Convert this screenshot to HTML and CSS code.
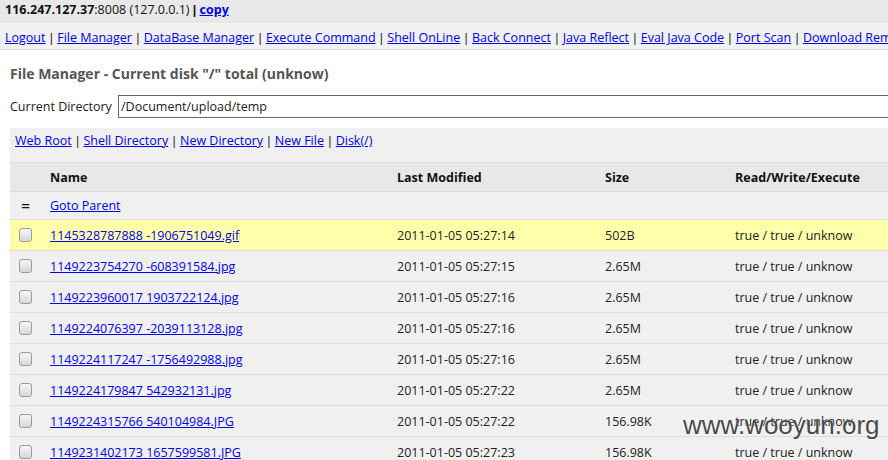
FILE: index.html
```html
<!DOCTYPE html>
<html>
<head>
<meta charset="utf-8">
<title>File Manager</title>
<link rel="stylesheet" href="styles.css">
</head>
<body>
<div class="topbar"><b>116.247.127.37</b>:8008 (127.0.0.1) <b class="tsep">|</b> <a class="copy" href="#">copy</a></div>
<div class="nav">
<a href="#">Logout</a> <span class="sep">|</span> <a href="#">File Manager</a> <span class="sep">|</span> <a href="#">DataBase Manager</a> <span class="sep">|</span> <a href="#">Execute Command</a> <span class="sep">|</span> <a href="#">Shell OnLine</a> <span class="sep">|</span> <a href="#">Back Connect</a> <span class="sep">|</span> <a href="#">Java Reflect</a> <span class="sep">|</span> <a href="#">Eval Java Code</a> <span class="sep">|</span> <a href="#">Port Scan</a> <span class="sep">|</span> <a href="#">Download Remote File</a>
</div>
<div class="main">
<h2 class="title">File Manager - Current disk "/" total (unknow)</h2>
<div class="dirrow">
<span class="dirlabel">Current Directory</span>
<input class="dirinput" type="text" value="/Document/upload/temp">
</div>
<div class="files">
<div class="toolbar"><a href="#">Web Root</a> <span class="sep">|</span> <a href="#">Shell Directory</a> <span class="sep">|</span> <a href="#">New Directory</a> <span class="sep">|</span> <a href="#">New File</a> <span class="sep">|</span> <a href="#">Disk(/)</a></div>
<div class="frow head"><span></span><span>Name</span><span>Last Modified</span><span>Size</span><span>Read/Write/Execute</span></div>
<div class="frow parent"><span class="eq">=</span><span><a href="#">Goto Parent</a></span></div>
<div class="frow item hl"><span><i class="cb"></i></span><span><a href="#">1145328787888 -1906751049.gif</a></span><span>2011-01-05 05:27:14</span><span>502B</span><span>true / true / unknow</span></div>
<div class="frow item"><span><i class="cb"></i></span><span><a href="#">1149223754270 -608391584.jpg</a></span><span>2011-01-05 05:27:15</span><span>2.65M</span><span>true / true / unknow</span></div>
<div class="frow item"><span><i class="cb"></i></span><span><a href="#">1149223960017 1903722124.jpg</a></span><span>2011-01-05 05:27:16</span><span>2.65M</span><span>true / true / unknow</span></div>
<div class="frow item"><span><i class="cb"></i></span><span><a href="#">1149224076397 -2039113128.jpg</a></span><span>2011-01-05 05:27:16</span><span>2.65M</span><span>true / true / unknow</span></div>
<div class="frow item"><span><i class="cb"></i></span><span><a href="#">1149224117247 -1756492988.jpg</a></span><span>2011-01-05 05:27:16</span><span>2.65M</span><span>true / true / unknow</span></div>
<div class="frow item"><span><i class="cb"></i></span><span><a href="#">1149224179847 542932131.jpg</a></span><span>2011-01-05 05:27:22</span><span>2.65M</span><span>true / true / unknow</span></div>
<div class="frow item"><span><i class="cb"></i></span><span><a href="#">1149224315766 540104984.JPG</a></span><span>2011-01-05 05:27:22</span><span>156.98K</span><span>true / true / unknow</span></div>
<div class="frow item"><span><i class="cb"></i></span><span><a href="#">1149231402173 1657599581.JPG</a></span><span>2011-01-05 05:27:23</span><span>156.98K</span><span>true / true / unknow</span></div>
</div>
</div>
<div class="watermark">www.wooyun.org</div>
</body>
</html>
```
FILE: styles.css
```css
html, body {
  margin: 0;
  padding: 0;
  overflow: hidden;
  background: #fff;
}
body {
  font-family: "Open Sans", "Noto Sans", sans-serif;
  font-size: 12.5px;
  color: #222;
  position: relative;
  height: 460px;
}
a {
  color: #0000ee;
  text-decoration: underline;
}
.sep {
  font-family: "Liberation Sans", Arial, sans-serif;
  color: #333;
  margin: 0 1px;
}
.tsep {
  font-family: "Liberation Sans", Arial, sans-serif;
}
.topbar {
  height: 23px;
  line-height: 20px;
  padding-left: 5px;
  background: #e8e8e8;
  border-bottom: 1px solid #f6f6f6;
  color: #111;
  white-space: nowrap;
}
.topbar .copy {
  font-weight: bold;
}
.nav {
  box-sizing: border-box;
  height: 26px;
  padding: 1px 0 0 5px;
  line-height: 26px;
  background: #f1f1f1;
  border-bottom: 1px solid #dcdcdc;
  white-space: nowrap;
  overflow: hidden;
}
.main {
  padding: 0 0 0 10px;
}
.title {
  margin: 0;
  padding-top: 14px;
  height: 31px;
  font-size: 14px;
  font-weight: bold;
  color: #555;
  line-height: 20px;
}
.dirrow {
  display: flex;
  align-items: center;
  height: 23px;
}
.dirlabel {
  width: 108px;
  flex: none;
  color: #222;
}
.dirinput {
  flex: 1;
  height: 23px;
  box-sizing: border-box;
  border: 1px solid #666;
  border-right: none;
  padding: 0 2px;
  margin: 0;
  font-family: inherit;
  font-size: 12.5px;
  color: #222;
  outline: none;
}
.files {
  margin-top: 10px;
}
.toolbar {
  box-sizing: border-box;
  height: 34px;
  padding: 1px 5px 0 5px;
  line-height: 24px;
  background: #f0f0f0;
  white-space: nowrap;
}
.frow {
  display: grid;
  grid-template-columns: 40px 347px 208px 130px 1fr;
  align-items: center;
  box-sizing: border-box;
  border-top: 1px solid #dcdcdc;
  background: #f0f0f0;
  white-space: nowrap;
}
.frow > span {
  overflow: hidden;
}
.head {
  height: 29px;
  background: #e8e8e8;
  font-weight: bold;
  color: #111;
}
.parent {
  height: 28px;
}
.parent > span:last-child {
  grid-column: 2 / 6;
}
.eq {
  padding-left: 11px;
  font-size: 16px;
  color: #111;
}
.item {
  height: 31px;
  color: #222;
}
.item.hl {
  background: #ffffaa;
}
.cb {
  display: block;
  width: 11px;
  height: 12px;
  margin-left: 9px;
  border: 1px solid #9a9a9a;
  border-radius: 3px;
  background: linear-gradient(#f6f6f6, #d8d8d8);
}
.watermark {
  position: absolute;
  left: 683px;
  top: 410px;
  font-family: "Liberation Sans", Arial, sans-serif;
  font-size: 26px;
  color: #4a4a4a;
  text-shadow: 0 0 2px #fff;
  white-space: nowrap;
}
```
